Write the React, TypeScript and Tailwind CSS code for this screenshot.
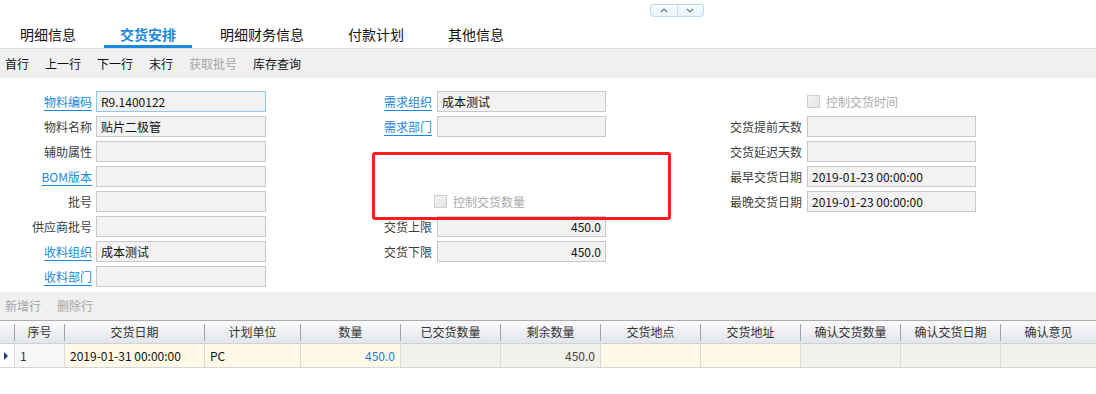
import React from 'react';

const font = { fontFamily: '"Noto Sans CJK SC", "Noto Sans", sans-serif' };

const tabs = ['明细信息', '交货安排', '明细财务信息', '付款计划', '其他信息'];

const tools = [
    { label: '首行' },
    { label: '上一行' },
    { label: '下一行' },
    { label: '末行' },
    { label: '获取批号', disabled: true },
    { label: '库存查询' },
];

type Field = {
    label?: string;
    link?: boolean;
    value?: string;
    align?: 'left' | 'right';
    focus?: boolean;
    check?: string;
    checkShift?: boolean;
} | null;

const leftCol: Field[] = [
    { label: '物料编码', link: true, value: 'R9.1400122', focus: true },
    { label: '物料名称', value: '贴片二极管' },
    { label: '辅助属性' },
    { label: 'BOM版本', link: true },
    { label: '批号' },
    { label: '供应商批号' },
    { label: '收料组织', link: true, value: '成本测试' },
    { label: '收料部门', link: true },
];

const midCol: Field[] = [
    { label: '需求组织', link: true, value: '成本测试' },
    { label: '需求部门', link: true },
    null,
    null,
    { check: '控制交货数量', checkShift: true },
    { label: '交货上限', value: '450.0', align: 'right' },
    { label: '交货下限', value: '450.0', align: 'right' },
];

const rightCol: Field[] = [
    { check: '控制交货时间' },
    { label: '交货提前天数' },
    { label: '交货延迟天数' },
    { label: '最早交货日期', value: '2019-01-23 00:00:00' },
    { label: '最晚交货日期', value: '2019-01-23 00:00:00' },
];

const Checkbox: React.FC<{ text: string; shift?: boolean }> = ({ text, shift }) => (
    <div className={`flex items-center gap-[6px] text-[12px] text-[#ababab] ${shift ? '-ml-[3px]' : ''}`}>
        <span className="w-[13px] h-[13px] border border-[#cfcfcf] bg-gradient-to-br from-[#f4f4f4] to-[#e6e6e6]" />
        <span>{text}</span>
    </div>
);

const Column: React.FC<{ fields: Field[]; labelW: string; inputW: string; gap: string }> = ({
    fields,
    labelW,
    inputW,
    gap,
}) => (
    <div className="flex flex-col gap-[4px]">
        {fields.map((f, i) => (
            <div key={i} className={`flex items-center h-[21px] ${gap}`}>
                <div className={`${labelW} shrink-0 text-right text-[12px] leading-[21px]`}>
                    {f && f.label && (
                        <span className={f.link ? 'text-[#1a88dc] underline underline-offset-[3px]' : 'text-[#404040]'}>
                            {f.label}
                        </span>
                    )}
                </div>
                {f && f.check && <Checkbox text={f.check} shift={f.checkShift} />}
                {f && f.label && (
                    <div
                        className={`${inputW} h-[21px] bg-[#f2f2f2] border ${
                            f.focus ? 'border-[#92c8f2]' : 'border-[#c8c8c8]'
                        } px-[4px] text-[12px] leading-[19px] text-[#111] ${f.align === 'right' ? 'text-right' : ''}`}
                    >
                        {f.value}
                    </div>
                )}
            </div>
        ))}
    </div>
);

const cols = [
    { title: '', w: 'w-[14px]' },
    { title: '序号', w: 'w-[50px]' },
    { title: '交货日期', w: 'w-[140px]' },
    { title: '计划单位', w: 'w-[96px]' },
    { title: '数量', w: 'w-[100px]' },
    { title: '已交货数量', w: 'w-[100px]' },
    { title: '剩余数量', w: 'w-[100px]' },
    { title: '交货地点', w: 'w-[100px]' },
    { title: '交货地址', w: 'w-[100px]' },
    { title: '确认交货数量', w: 'w-[100px]' },
    { title: '确认交货日期', w: 'w-[100px]' },
    { title: '确认意见', w: 'flex-1' },
];

const row = [
    { text: '', bg: 'bg-white' },
    { text: '1', bg: 'bg-[#f7f7f7]', cls: 'text-[#333]' },
    { text: '2019-01-31 00:00:00', bg: 'bg-[#fff9e8]', cls: 'text-[#111]' },
    { text: 'PC', bg: 'bg-[#fff9e8]', cls: 'text-[#111]' },
    { text: '450.0', bg: 'bg-[#fff9e8]', cls: 'text-[#1a7fd6] text-right' },
    { text: '', bg: 'bg-[#f3f1ec]' },
    { text: '450.0', bg: 'bg-[#f3f1ec]', cls: 'text-[#444] text-right' },
    { text: '', bg: 'bg-[#fff9e8]' },
    { text: '', bg: 'bg-[#fff9e8]' },
    { text: '', bg: 'bg-[#f3f1ec]' },
    { text: '', bg: 'bg-[#f3f1ec]' },
    { text: '', bg: 'bg-[#f3f1ec]' },
];

export default function App() {
    return (
        <div className="w-[1096px] h-[394px] bg-white overflow-hidden" style={font}>
            {/* collapse handle */}
            <div className="h-[24px] pt-[4px]">
                <div className="ml-[650px] w-[54px] h-[13px] flex items-center border border-[#b9dcf5] rounded-b-[4px] rounded-t-[2px] bg-gradient-to-b from-[#f7fbff] to-[#e9f4fd]">
                    <span className="flex-1 flex justify-center">
                        <svg width="8" height="5" viewBox="0 0 8 5">
                            <path d="M1 4 L4 1 L7 4" fill="none" stroke="#777" strokeWidth="1.2" />
                        </svg>
                    </span>
                    <span className="w-px h-[9px] bg-[#c8d8e6]" />
                    <span className="flex-1 flex justify-center">
                        <svg width="8" height="5" viewBox="0 0 8 5">
                            <path d="M1 1 L4 4 L7 1" fill="none" stroke="#777" strokeWidth="1.2" />
                        </svg>
                    </span>
                </div>
            </div>

            {/* tabs */}
            <div className="flex gap-[12px] pl-[4px] h-[25px] border-b border-[#dcdcdc]">
                {tabs.map((t, i) => (
                    <div
                        key={t}
                        className={`px-[16px] text-[14px] leading-[20px] ${
                            i === 1 ? 'text-[#1a88dc] font-bold border-b-[3px] border-[#1a88dc]' : 'text-[#111]'
                        }`}
                    >
                        {t}
                    </div>
                ))}
            </div>

            {/* toolbar */}
            <div className="h-[29px] bg-[#f0f0f0] flex items-center gap-[16px] pl-[5px] text-[12px]">
                {tools.map((t) => (
                    <span key={t.label} className={t.disabled ? 'text-[#a6a6a6]' : 'text-[#111]'}>
                        {t.label}
                    </span>
                ))}
            </div>

            {/* form */}
            <div className="relative h-[214px] pt-[13px] flex">
                <Column fields={leftCol} labelW="w-[92px]" inputW="w-[170px]" gap="gap-[4px]" />
                <Column fields={midCol} labelW="w-[166px]" inputW="w-[169px]" gap="gap-[5px]" />
                <Column fields={rightCol} labelW="w-[196px]" inputW="w-[169px]" gap="gap-[5px]" />
                <div className="absolute left-[372px] top-[74px] w-[299px] h-[68px] border-[3px] border-[#ff1c1c] rounded-[3px]" />
            </div>

            {/* grid toolbar */}
            <div className="h-[28px] bg-[#f0f0f0] flex items-center gap-[16px] pl-[5px] text-[12px] text-[#a6a6a6]">
                <span>新增行</span>
                <span>删除行</span>
            </div>

            {/* table header */}
            <div className="flex h-[24px] border-t border-[#a9adb2] border-b border-b-[#cfd3d8] bg-gradient-to-b from-[#fbfbfc] to-[#e2e5e9] text-[12px] text-[#333]">
                {cols.map((c, i) => (
                    <div key={i} className={`${c.w} shrink-0 flex items-center`}>
                        {i > 0 && <span className="w-px h-[17px] bg-[#9ea3a9]" />}
                        <span className="flex-1 text-center leading-[22px]">{c.title}</span>
                    </div>
                ))}
            </div>

            {/* data row */}
            <div className="flex h-[24px] border-b border-[#d6d6d6] text-[12px]">
                {cols.map((c, i) => (
                    <div
                        key={i}
                        className={`${c.w} shrink-0 ${row[i].bg} ${i > 0 ? 'border-l border-[#dadada]' : ''} px-[5px] leading-[23px] ${
                            row[i].cls ?? ''
                        }`}
                    >
                        {i === 0 ? (
                            <svg width="5" height="8" viewBox="0 0 5 8" className="mt-[8px] -ml-[1px]">
                                <path d="M0 0 L4 4 L0 8 Z" fill="#1f3a66" />
                            </svg>
                        ) : (
                            row[i].text
                        )}
                    </div>
                ))}
            </div>
        </div>
    );
}
